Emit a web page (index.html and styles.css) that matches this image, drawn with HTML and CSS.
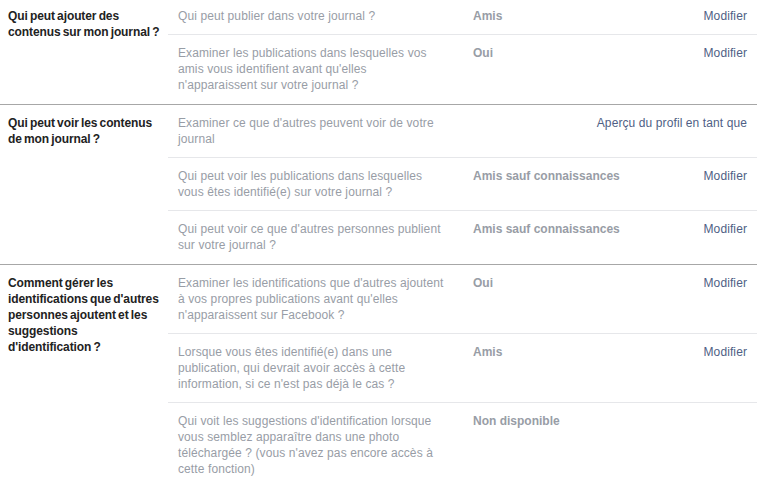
FILE: index.html
```html
<html lang="fr">
<head>
  <meta charset="UTF-8" />
  <title>Journal et identification</title>
  <link rel="stylesheet" href="styles.css">
</head>
<body>
  <div class="settings">

    <div class="section">
      <h3 class="section-title">Qui peut ajouter des contenus sur mon journal ?</h3>
      <div class="rows">
        <div class="row">
          <div class="desc">Qui peut publier dans votre journal ?</div>
          <div class="value">Amis</div>
          <a class="edit" href="#">Modifier</a>
        </div>
        <div class="row">
          <div class="desc">Examiner les publications dans lesquelles vos amis vous identifient avant qu'elles n'apparaissent sur votre journal ?</div>
          <div class="value">Oui</div>
          <a class="edit" href="#">Modifier</a>
        </div>
      </div>
    </div>

    <div class="section">
      <h3 class="section-title">Qui peut voir les contenus de mon journal ?</h3>
      <div class="rows">
        <div class="row">
          <div class="desc">Examiner ce que d'autres peuvent voir de votre journal</div>
          <a class="edit wide" href="#">Aperçu du profil en tant que</a>
        </div>
        <div class="row">
          <div class="desc">Qui peut voir les publications dans lesquelles vous êtes identifié(e) sur votre journal ?</div>
          <div class="value">Amis sauf connaissances</div>
          <a class="edit" href="#">Modifier</a>
        </div>
        <div class="row">
          <div class="desc">Qui peut voir ce que d'autres personnes publient sur votre journal ?</div>
          <div class="value">Amis sauf connaissances</div>
          <a class="edit" href="#">Modifier</a>
        </div>
      </div>
    </div>

    <div class="section last">
      <h3 class="section-title">Comment gérer les identifications que d'autres personnes ajoutent et les suggestions d'identification ?</h3>
      <div class="rows">
        <div class="row">
          <div class="desc">Examiner les identifications que d'autres ajoutent à vos propres publications avant qu'elles n'apparaissent sur Facebook ?</div>
          <div class="value">Oui</div>
          <a class="edit" href="#">Modifier</a>
        </div>
        <div class="row">
          <div class="desc">Lorsque vous êtes identifié(e) dans une publication, qui devrait avoir accès à cette information, si ce n'est pas déjà le cas ?</div>
          <div class="value">Amis</div>
          <a class="edit" href="#">Modifier</a>
        </div>
        <div class="row">
          <div class="desc">Qui voit les suggestions d'identification lorsque vous semblez apparaître dans une photo téléchargée ? (vous n'avez pas encore accès à cette fonction)</div>
          <div class="value">Non disponible</div>
        </div>
      </div>
    </div>

  </div>
</body>
</html>
```

FILE: styles.css
```css
/* Base */
body {
  margin: 0;
  background-color: #fff;
  font-family: "Liberation Sans", Arial, sans-serif;
  font-size: 12px;
  line-height: 16px;
  color: #333;
}
.settings {
  width: 757px;
  margin-top: -2px;
}
.section {
  display: grid;
  grid-template-columns: 168px 1fr;
  padding-bottom: 1px;
  border-bottom: 1px solid #a7a7a7;
}
.section.last {
  border-bottom: none;
}
.section-title {
  margin: 0;
  padding: 10px 7px 10px 8px;
  font-size: 12px;
  font-weight: 700;
  letter-spacing: -0.1px;
  word-spacing: -1px;
  color: #222;
}
.row {
  display: grid;
  grid-template-columns: 268px 1fr auto;
  column-gap: 27px;
  padding: 10px 10px;
  border-bottom: 1px solid #e6e7ea;
  letter-spacing: 0.1px;
}
.row:last-child {
  border-bottom: none;
}
.desc {
  color: #989da6;
}
.value {
  color: #989da6;
  font-weight: 700;
  letter-spacing: 0;
}
.edit {
  color: #4f5f85;
  text-decoration: none;
  text-align: right;
}
.edit.wide {
  grid-column: 2 / 4;
}
```
